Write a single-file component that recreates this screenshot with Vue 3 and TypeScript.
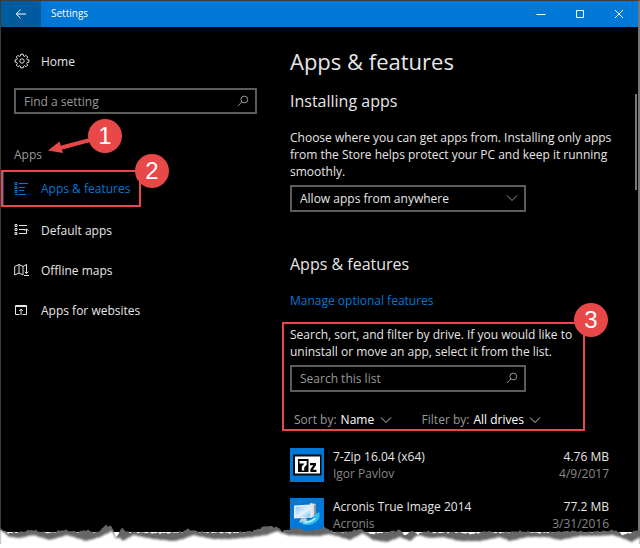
<script setup lang="ts">
import { computed, ref } from 'vue'

interface NavItem {
  label: string
  icon: 'list' | 'defaults' | 'map' | 'web'
}

interface InstalledApp {
  name: string
  publisher: string
  size: string
  date: string
  icon: 'zip' | 'pc'
}

const navItems: NavItem[] = [
  { label: 'Apps & features', icon: 'list' },
  { label: 'Default apps', icon: 'defaults' },
  { label: 'Offline maps', icon: 'map' },
  { label: 'Apps for websites', icon: 'web' },
]

const apps: InstalledApp[] = [
  { name: '7-Zip 16.04 (x64)', publisher: 'Igor Pavlov', size: '4.76 MB', date: '4/9/2017', icon: 'zip' },
  { name: 'Acronis True Image 2014', publisher: 'Acronis', size: '77.2 MB', date: '3/31/2016', icon: 'pc' },
]

const activeItem = ref('Apps & features')
const settingQuery = ref('')
const listQuery = ref('')
const source = ref('Allow apps from anywhere')
const sortBy = ref('Name')
const filterBy = ref('All drives')

type Point = [number, number]

// Outline of the torn paper edge: outer shadow and the white sheet below it.
const shadowEdge: Point[] = [
  [0, 9], [8, 13], [20, 12], [32, 10], [42, 12], [50, 13], [63, 10], [78, 12], [86, 10], [97, 13],
  [106, 5], [112, 7], [114, 13], [117, 18], [119, 13], [122, 7], [126, 12], [153, 13], [167, 13],
  [182, 12], [187, 9], [200, 12], [230, 13], [253, 11], [266, 6], [277, 7], [282, 11], [297, 8],
  [307, 11], [320, 9], [325, 7], [333, 12], [347, 12], [360, 9], [370, 14], [387, 12], [400, 10],
  [406, 16], [411, 10], [417, 14], [427, 11], [435, 13], [453, 12], [473, 14], [487, 11], [497, 13],
  [520, 11], [537, 13], [553, 12], [573, 11], [587, 12], [607, 11], [615, 10], [623, 15], [633, 12], [640, 9],
]
const paperEdge: Point[] = [
  [0, 9], [9, 17], [20, 18], [33, 15], [50, 20], [67, 15], [86, 21], [100, 17], [112, 11], [116, 18],
  [120, 18], [123, 21], [133, 15], [153, 19], [173, 21], [183, 19], [193, 15], [213, 19], [230, 19],
  [253, 17], [267, 15], [277, 11], [287, 15], [307, 16], [320, 16], [328, 14], [337, 16], [350, 20],
  [363, 13], [373, 20], [387, 22], [400, 17], [410, 21], [418, 15], [430, 18], [443, 17], [460, 21],
  [480, 21], [500, 17], [510, 21], [527, 17], [547, 17], [560, 20], [580, 16], [597, 16], [613, 15],
  [622, 18], [632, 22], [640, 17],
]

function heightAt(points: Point[], x: number): number {
  for (let i = 1; i < points.length; i++) {
    const [x0, y0] = points[i - 1]
    const [x1, y1] = points[i]
    if (x <= x1) return y0 + ((y1 - y0) * (x - x0)) / (x1 - x0)
  }
  return points[points.length - 1][1]
}

function edgePath(points: Point[], roughness: number): string {
  const parts = ['M0 48']
  for (let x = 0; x <= 640; x += 2) {
    const bump = Math.sin(x * 1.7) * roughness + Math.sin(x * 0.83) * roughness
    parts.push(`L${x} ${(heightAt(points, x) + bump).toFixed(2)}`)
  }
  return parts.join('') + 'L640 48Z'
}

const shadowPath = computed(() => edgePath(shadowEdge, 0.6))
const paperPath = computed(() => edgePath(paperEdge, 0.2))
</script>

<template>
  <div class="page">
    <div class="window">
      <header class="titlebar">
        <button class="back" type="button" aria-label="Back">
          <svg width="12" height="12" viewBox="0 0 12 12"><path d="M11 6H1.5M5.5 1.7L1.2 6l4.3 4.3" /></svg>
        </button>
        <span class="title">Settings</span>
        <button class="caption" type="button" aria-label="Minimize">
          <svg width="10" height="10" viewBox="0 0 10 10"><path d="M.5 5.5h9" /></svg>
        </button>
        <button class="caption" type="button" aria-label="Maximize">
          <svg width="10" height="10" viewBox="0 0 10 10"><path d="M1.5 1.5h7v7h-7z" /></svg>
        </button>
        <button class="caption" type="button" aria-label="Close">
          <svg width="10" height="10" viewBox="0 0 10 10"><path d="M1 1l8 8M9 1L1 9" /></svg>
        </button>
      </header>

      <div class="body">
        <aside class="sidebar">
          <a class="nav-link" href="#home">
            <svg class="icon" width="16" height="16" viewBox="0 0 16 16">
              <path d="M6.8 1.2h2.4l.3 1.7 1.1.5 1.5-1 1.6 1.6-1 1.5.5 1.1 1.7.3v2.3l-1.7.3-.5 1.1 1 1.5-1.6 1.6-1.5-1-1.1.5-.3 1.7H6.8l-.3-1.7-1.1-.5-1.5 1-1.6-1.6 1-1.5-.5-1.1-1.7-.3V6.9l1.7-.3.5-1.1-1-1.5 1.6-1.6 1.5 1 1.1-.5z" />
              <circle cx="8" cy="8" r="2.2" />
            </svg>
            <span>Home</span>
          </a>

          <div class="field">
            <input v-model="settingQuery" type="text" placeholder="Find a setting" aria-label="Find a setting" />
            <svg class="field-icon" width="12" height="12" viewBox="0 0 12 12"><circle cx="7.3" cy="4.5" r="3.4" /><path d="M4.8 7L.8 11" /></svg>
          </div>

          <div class="group">
            <h2 class="group-label">Apps</h2>
            <svg class="arrow" width="46" height="18" viewBox="0 0 46 18">
              <path class="arrow-line" d="M46 3L12 12" />
              <path class="arrow-head" d="M0 14.5L11.5 5.5L15 17z" />
            </svg>
            <span class="badge badge-one">1</span>
          </div>

          <nav>
            <ul class="nav-list">
              <li v-for="item in navItems" :key="item.label" :class="{ active: item.label === activeItem }">
                <a class="nav-link" href="#apps" @click.prevent="activeItem = item.label">
                  <svg v-if="item.icon === 'list'" class="icon" width="16" height="16" viewBox="0 0 16 16">
                    <path d="M1 1.5h2v2H1zM1 5.5h2v2H1zM1 9.5h2v2H1zM1 13.5h3M5 2.5h9M5 6.5h6M5 9.5h5M5 13.5h7" />
                  </svg>
                  <svg v-else-if="item.icon === 'defaults'" class="icon" width="16" height="16" viewBox="0 0 16 16">
                    <path d="M1 2.5h2v2H1zM1 6.5h2v2H1zM1 10.5h2v2H1zM5 3.5h8M5 7.5h6M5 11.5h7.500V7M10.700 8.700l1.800-1.900 1.900 1.900" />
                  </svg>
                  <svg v-else-if="item.icon === 'map'" class="icon" width="16" height="16" viewBox="0 0 16 16">
                    <path d="M12.500 6V2.500L9 4.500 5 2.500l-4.300 2V13L5 11l4 2M5 2.500V11M9 4.500V13M12.500 2.500v9M10.700 9.700l1.800 1.900 1.900-1.900M10 13.500h5" />
                  </svg>
                  <svg v-else class="icon" width="16" height="16" viewBox="0 0 16 16">
                    <path d="M5.500 12.500h-4v-9h11v9h-4M1.500 4.500h11M7 13V7.500M5 9l2-2 2 2" />
                  </svg>
                  <span>{{ item.label }}</span>
                </a>
                <span v-if="item.label === activeItem" class="badge badge-two">2</span>
              </li>
            </ul>
          </nav>
        </aside>

        <main class="content">
          <h1>Apps &amp; features</h1>

          <section>
            <h2>Installing apps</h2>
            <p class="intro">
              Choose where you can get apps from. Installing only apps from the Store helps protect your PC and keep
              it running smoothly.
            </p>
            <div class="field">
              <select v-model="source" aria-label="Where to get apps">
                <option>Allow apps from anywhere</option>
              </select>
              <svg class="field-icon" width="12" height="12" viewBox="0 0 12 12"><path d="M1 3.5l5 5 5-5" /></svg>
            </div>
          </section>

          <section class="features">
            <h2>Apps &amp; features</h2>
            <a class="manage" href="#optional">Manage optional features</a>

            <div class="marked">
              <span class="badge badge-three">3</span>
              <p>Search, sort, and filter by drive. If you would like to uninstall or move an app, select it from the list.</p>
              <div class="field">
                <input v-model="listQuery" type="text" placeholder="Search this list" aria-label="Search this list" />
                <svg class="field-icon" width="12" height="12" viewBox="0 0 12 12"><circle cx="7.3" cy="4.5" r="3.4" /><path d="M4.8 7L.8 11" /></svg>
              </div>
              <div class="filters">
                <label class="filter">
                  <span>Sort by:</span>
                  <select v-model="sortBy"><option>Name</option></select>
                  <svg width="12" height="12" viewBox="0 0 12 12"><path d="M1 3.5l5 5 5-5" /></svg>
                </label>
                <label class="filter">
                  <span>Filter by:</span>
                  <select v-model="filterBy"><option>All drives</option></select>
                  <svg width="12" height="12" viewBox="0 0 12 12"><path d="M1 3.5l5 5 5-5" /></svg>
                </label>
              </div>
            </div>

            <ul class="apps">
              <li v-for="app in apps" :key="app.name">
                <svg v-if="app.icon === 'zip'" class="tile" width="34" height="34" viewBox="0 0 34 34">
                  <path fill="#0a0a0a" d="M3 6.500h28.500v21H3z" />
                  <path fill="#fff" d="M5 8.500h25v17H5z" />
                  <path fill="#000" d="M8 11h10.500v13H8z" />
                  <path fill="none" stroke="#fff" stroke-width="2.400" d="M9.500 14.200h6v2L13 19v3.500" />
                  <path fill="none" stroke="#000" stroke-width="2.200" d="M20 16.100h4.800v1L21.500 21.500v1.400H26.500" />
                </svg>
                <svg v-else class="tile" width="34" height="34" viewBox="0 0 34 34">
                  <defs>
                    <linearGradient id="screen" x1="0" y1="0" x2="1" y2="1">
                      <stop offset="0" stop-color="#8fc4f2" />
                      <stop offset=".55" stop-color="#e3f3ff" />
                      <stop offset="1" stop-color="#72b8ef" />
                    </linearGradient>
                  </defs>
                  <path fill="#dce3e9" d="M20 5l6 1v12l-6 2z" />
                  <path fill="#8999a6" d="M24 7l2-1v12l-2 1z" />
                  <path fill="#e8eef3" d="M4 7.500l17-1 1 13-18 1z" />
                  <path fill="url(#screen)" d="M5.500 9L20 8l.5 10.500-15 1z" />
                  <path fill="#bfd0dc" d="M11 20.500l5-.5 2 4-9 .5z" />
                  <path fill="#34bde8" d="M12 23q8 2 13-4l-2-1 6-4q2 5-2 9-6 6-15 3z" />
                  <path fill="#a3efff" d="M13 23.500q7 0 11-4l2 1q-5 5-12 5z" />
                </svg>
                <div class="app-name"><strong>{{ app.name }}</strong><span>{{ app.publisher }}</span></div>
                <div class="app-meta"><strong>{{ app.size }}</strong><span>{{ app.date }}</span></div>
              </li>
            </ul>
          </section>
          <div class="scrollbar"></div>
        </main>
      </div>
    </div>

    <svg class="torn" viewBox="0 0 640 28" preserveAspectRatio="none" aria-hidden="true">
      <defs>
        <filter id="soft" x="-1%" y="-10%" width="102%" height="120%"><feGaussianBlur stdDeviation="1" /></filter>
      </defs>
      <path fill="#666" :d="shadowPath" />
      <path fill="#fff" filter="url(#soft)" :d="paperPath" />
      <path fill="#fff" d="M0 24h640v4H0z" />
    </svg>
  </div>
</template>

<style>
body {
  margin: 0;
  background: #fff;
}
</style>

<style scoped>
.page {
  font: 12px/17px "Open Sans", "Noto Sans", sans-serif;
  color: #e6e6e6;
  overflow: hidden;
}

.window {
  background: #000;
  border: 1px solid #3b3b3b;
  border-right: 2px solid #777;
  border-bottom: 0;
}

h1,
h2,
p,
ul {
  margin: 0;
  padding: 0;
  font-weight: 400;
  list-style: none;
}

button,
input,
select {
  font: inherit;
  color: inherit;
  border: 0;
  border-radius: 0;
  background: transparent;
  margin: 0;
  padding: 0;
}

select {
  appearance: none;
}

a {
  color: inherit;
  text-decoration: none;
}

svg {
  display: block;
  flex: none;
  fill: none;
  stroke: currentColor;
}

.titlebar {
  display: flex;
  height: 26px;
  background: #0078d7;
  color: #fff;
  font-size: 10px;
}

.titlebar button {
  display: grid;
  place-items: center;
  width: 39px;
}

.titlebar .back {
  width: 40px;
  background: #005a9e;
}

.title {
  flex: 1;
  padding-left: 10px;
  line-height: 25px;
}

.body {
  display: flex;
}

.sidebar {
  flex: none;
  width: 281px;
  padding-top: 14px;
}

.nav-link {
  display: flex;
  align-items: center;
  gap: 11px;
  height: 40px;
  padding-left: 13px;
}

.field {
  display: flex;
  position: relative;
  height: 22px;
  border: 2px solid #5c5c5c;
}

.sidebar .field {
  margin: 7px 25px 0 13px;
}

.field input,
.field select {
  flex: 1;
  min-width: 0;
  padding: 0 28px 0 8px;
  outline: 0;
}

.field input::placeholder {
  color: #999;
  opacity: 1;
}

.field-icon {
  position: absolute;
  right: 6px;
  top: 5px;
  color: #999;
  pointer-events: none;
}

.content .field {
  height: 23px;
  width: 232px;
  margin-top: 5px;
}

.group {
  position: relative;
  margin: 31px 0 5px 13px;
}

.group-label {
  font-size: 12px;
  line-height: 20px;
  color: #999;
}

.arrow {
  position: absolute;
  left: 34px;
  top: -9px;
  stroke: none;
}

.arrow-line {
  stroke: #e84848;
  stroke-width: 4;
}

.arrow-head {
  fill: #e84848;
}

.badge {
  position: absolute;
  width: 34px;
  height: 34px;
  border-radius: 50%;
  background: #e84848;
  color: #fff;
  font: 24px/34px "Liberation Sans", sans-serif;
  text-align: center;
}

.badge-one {
  left: 74px;
  top: -26px;
}

.badge-two {
  right: -30px;
  top: -18px;
}

.badge-three {
  right: -25px;
  top: -21px;
}

.nav-list li {
  position: relative;
}

.nav-list .active {
  box-sizing: border-box;
  width: 140px;
  height: 37px;
  margin: 1px 0 3px;
  border: 2px solid #e84848;
  color: #0078d7;
}

.active .nav-link {
  height: 33px;
  padding-left: 10px;
  border-left: 1px solid #004a85;
}

.content {
  position: relative;
  flex: 1;
  min-width: 0;
  padding: 17px 12px 0 8px;
}

h1 {
  font-size: 22px;
  line-height: 34px;
}

.content h2 {
  font-size: 16px;
  line-height: 24px;
}

section h2 {
  margin: 11px 0;
}

.content p {
  max-width: 330px;
}

.intro {
  padding-top: 5px;
}

.features {
  padding-top: 29px;
}

.manage {
  display: block;
  margin-top: 16px;
  color: #0078d7;
}

.marked {
  position: relative;
  box-sizing: border-box;
  max-width: 303px;
  margin: 13px 0 17px -8px;
  padding: 2px 0 1px 6px;
  border: 2px solid #e84848;
}

.filters {
  display: flex;
  gap: 30px;
  padding: 19px 0 0 4px;
}

.filter {
  display: flex;
  align-items: center;
  gap: 4px;
  color: #999;
}

.filter select {
  color: #fff;
}

.filter svg {
  margin-left: 1px;
  color: #ccc;
}

.apps {
  display: grid;
  gap: 16px;
  margin-right: 17px;
}

.apps li {
  display: flex;
  align-items: flex-start;
  gap: 9px;
  height: 34px;
}

.tile {
  background: #0078d7;
  stroke: none;
}

.apps strong,
.apps span {
  display: block;
  font-weight: 400;
}

.apps span {
  color: #888;
}

.app-name {
  flex: 1;
}

.app-meta {
  text-align: right;
}

.scrollbar {
  position: absolute;
  right: 1px;
  top: 67px;
  width: 2px;
  height: 96px;
  background: #777;
}

.torn {
  position: relative;
  width: 100%;
  height: 28px;
  margin-top: -12px;
  stroke: none;
}
</style>
